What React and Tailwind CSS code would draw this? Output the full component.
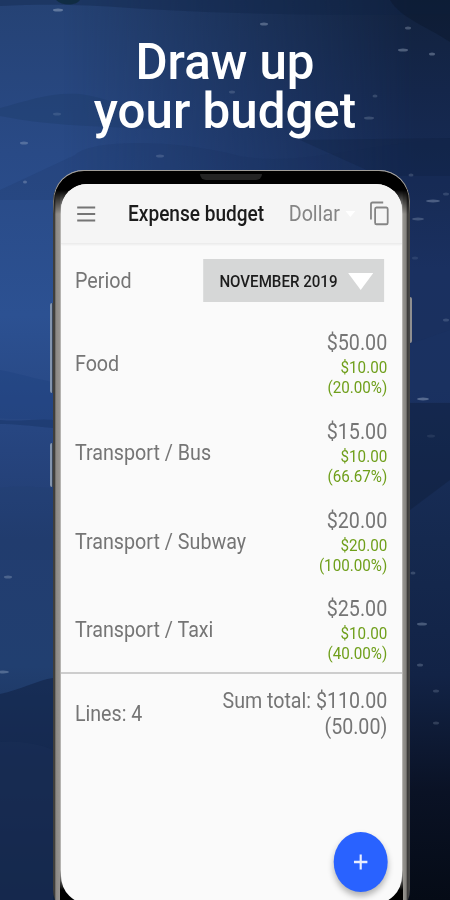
import { clsx } from "clsx";

const budgetLines = [
  { name: "Food", amount: "$50.00", spent: "$10.00", percent: "(20.00%)" },
  { name: "Transport / Bus", amount: "$15.00", spent: "$10.00", percent: "(66.67%)" },
  { name: "Transport / Subway", amount: "$20.00", spent: "$20.00", percent: "(100.00%)" },
  { name: "Transport / Taxi", amount: "$25.00", spent: "$10.00", percent: "(40.00%)" },
];

// x, y, half width, opacity
const stars = [
  [58, 10, 5, 0.4],
  [264, 24, 4, 0.35],
  [408, 28, 3, 0.3],
  [403, 50, 5, 0.35],
  [432, 54, 3, 0.35],
  [232, 92, 3, 0.2],
  [375, 96, 2.5, 0.2],
  [369, 118, 5, 0.22],
  [57, 114, 4, 0.15],
  [24, 143, 4, 0.3],
  [160, 156, 4, 0.2],
  [25, 182, 2, 0.3],
  [411, 175, 2.5, 0.2],
  [433, 201, 7, 0.32],
  [418, 219, 6, 0.26],
  [446, 194, 3, 0.18],
  [415, 258, 3, 0.12],
  [446, 320, 3, 0.2],
  [423, 399, 6, 0.38],
  [431, 436, 4, 0.1],
  [8, 577, 4, 0.28],
  [413, 573, 2.5, 0.22],
  [422, 624, 5, 0.32],
  [3, 672, 6, 0.32],
  [420, 665, 3, 0.25],
  [436, 691, 3, 0.2],
  [436, 723, 3, 0.2],
];

const Backdrop = () => (
  <svg
    className="absolute inset-0"
    width="450"
    height="900"
    viewBox="0 0 450 900"
    preserveAspectRatio="none"
  >
    <defs>
      <linearGradient id="left" x1="0" y1="0" x2="0" y2="1">
        <stop offset="0" stopColor="#254274" />
        <stop offset="0.17" stopColor="#294a86" />
        <stop offset="0.35" stopColor="#2c5192" />
        <stop offset="0.5" stopColor="#26447e" />
        <stop offset="0.6" stopColor="#223d70" />
        <stop offset="0.74" stopColor="#213f70" />
        <stop offset="0.85" stopColor="#1b3159" />
        <stop offset="1" stopColor="#10233f" />
      </linearGradient>
      <linearGradient id="right" x1="0" y1="0" x2="0" y2="1">
        <stop offset="0" stopColor="#12223e" />
        <stop offset="0.1" stopColor="#14264a" />
        <stop offset="0.3" stopColor="#1a3060" />
        <stop offset="0.43" stopColor="#1a305e" />
        <stop offset="0.6" stopColor="#15294f" />
        <stop offset="0.75" stopColor="#122346" />
        <stop offset="0.88" stopColor="#0a1225" />
        <stop offset="1" stopColor="#050b16" />
      </linearGradient>
      <linearGradient id="fade" x1="0" y1="0" x2="1" y2="0">
        <stop offset="0.14" stopColor="#fff" stopOpacity="0" />
        <stop offset="0.92" stopColor="#fff" />
      </linearGradient>
      <mask id="rightMask">
        <rect width="450" height="900" fill="url(#fade)" />
      </mask>
    </defs>
    <rect width="450" height="900" fill="url(#left)" />
    <rect width="450" height="900" fill="url(#right)" mask="url(#rightMask)" />
    {/* Hills and clouds */}
    <path d="M0 0H450V14C330 16 220 14 130 8C80 4 40 4 0 6Z" fill="#0f2344" opacity="0.35" />
    <path d="M56 0H80C76 6 62 6 56 0Z" fill="#0e2a3c" opacity="0.8" />
    <path d="M390 0H450V42C430 28 400 18 390 0Z" fill="#081426" opacity="0.35" />
    <path d="M0 108C30 100 50 92 80 94C120 100 150 118 170 130C120 126 60 128 0 116Z" fill="#1b3765" opacity="0.3" />
    <path d="M75 155C90 140 170 138 240 156C300 168 380 140 450 140V200H0V190Z" fill="#132a52" opacity="0.14" />
    <path d="M300 140L450 138V176H380Z" fill="#0c1a30" opacity="0.2" />
    <path d="M0 370C20 374 40 380 53 382V420C30 418 15 420 0 418Z" fill="#1f4080" opacity="0.4" />
    <path d="M0 420C20 422 40 418 53 420V428C30 426 15 424 0 424Z" fill="#152f5e" opacity="0.4" />
    <path d="M0 488C20 484 40 488 53 488V560H0Z" fill="#1b3663" opacity="0.1" />
    <path d="M0 694C20 690 38 680 53 678V900H0Z" fill="#12254a" opacity="0.65" />
    <path d="M0 742C20 740 40 744 53 750V900H0Z" fill="#1b3058" opacity="0.4" />
    <path d="M410 344L450 330V402H410Z" fill="#1c3668" opacity="0.3" />
    <path d="M410 403H450V480L410 510Z" fill="#0c1a34" opacity="0.35" />
    {stars.map(([x, y, r, o]) => (
      <ellipse key={`${x}-${y}`} cx={x} cy={y} rx={r} ry="1.5" fill="#b9c8dc" opacity={o} />
    ))}
  </svg>
);

const CopyIcon = () => (
  <svg width="24" height="28" viewBox="0 0 24 28" fill="none" stroke="#858585" strokeWidth="2">
    <path d="M2.4 19.5V4.2Q2.4 2.6 4.2 2.6H16" />
    <rect x="7" y="7.4" width="14" height="16.8" rx="1.5" />
  </svg>
);

const BudgetRow = ({ line }) => (
  <div className="flex h-[88.67px] items-center justify-between pl-[15.5px] pr-[16.5px]">
    <span className="pt-px text-[21.9px] leading-7">{line.name}</span>
    <div className="-mt-px flex flex-col items-end">
      <span className="text-[21.9px] leading-7">{line.amount}</span>
      <span className="text-[16.9px] leading-5 text-[#6f9f1b]">{line.spent}</span>
      <span className="text-[16.9px] leading-5 text-[#6f9f1b]">{line.percent}</span>
    </div>
  </div>
);

const SideButton = ({ className }) => (
  <div className={clsx("absolute w-[4px] rounded-sm", className)} />
);

const App = () => {
  return (
    <div className="relative flex h-[900px] w-[450px] flex-col overflow-hidden bg-[#1d3666] font-['Roboto',sans-serif]">
      <Backdrop />

      <h1 className="relative mt-[38px] origin-center scale-x-[0.985] text-center text-[50px] leading-[49px] font-medium text-white">
        Draw up
        <br />
        your budget
      </h1>

      {/* Phone */}
      <div className="relative mt-[33.5px] ml-[53px] w-[357px]">
        <SideButton className="top-[133px] -left-[3px] h-[90px] border-l-2 border-[#8294ae] bg-[#3a4658]" />
        <SideButton className="top-[273px] -left-[3px] h-[44px] border-l-2 border-[#8294ae] bg-[#3a4658]" />
        <SideButton className="top-[127px] -right-[2px] h-[46px] bg-[#8f8f90]" />
        <div className="relative h-[750px] overflow-hidden rounded-[31px] bg-[linear-gradient(to_right,#3f3e3b_0,#3f3e3b_1.5px,#8b8884_3px,#96938f_6.5px,#c4c3c1_8px,#c4c3c1_349px,#94928d_350.5px,#85837f_353px,#3d3c3b_354.5px,#4a4a4a_357px)]">
          {/* Black glass edge, only visible at the top and bottom */}
          <div className="absolute inset-0 rounded-[31px] border-[1.5px] border-[#a09d98] bg-black mask-[linear-gradient(#000_20px,transparent_44px)]" />
          <div className="absolute top-[690px] right-[7px] bottom-0 left-[7px] bg-black mask-[linear-gradient(transparent_10px,#000_30px)]" />
          <div className="absolute top-[4px] left-[147px] h-[6px] w-[62px] rounded-b-md bg-[#242424]" />

          <div className="relative mt-[14px] ml-[8px] h-[720px] w-[341px] overflow-hidden rounded-t-[26px] rounded-b-[28px] bg-[#fafafa]">
            {/* The screen is drawn at 10/9 width and squeezed back */}
            <div className="h-full w-[379px] origin-left scale-x-90 text-[#757575]">
              <header className="flex h-[60px] items-center border-b border-[#ececec] bg-[#f5f5f5] pt-px shadow-xs">
                <svg className="ml-[17px]" width="22" height="16" viewBox="0 0 22 16" stroke="#757575" strokeWidth="2">
                  <path d="M1 1.5H21M1 8H21M1 14.5H21" />
                </svg>
                <span className="ml-[35.5px] w-[178.5px] pt-px text-[21.2px] font-medium whitespace-nowrap text-[#1c1c1c]">
                  Expense budget
                </span>
                <span className="pt-[2px] text-[21.9px] text-[#858585]">Dollar</span>
                <svg className="ml-[6px]" width="11" height="6" viewBox="0 0 11 6" fill="#fff">
                  <path d="M0 0H11L5.5 6Z" />
                </svg>
                <div className="ml-[15px]">
                  <CopyIcon />
                </div>
              </header>

              <div className="flex h-[75px] items-center justify-between pl-[15.5px] pr-[20px]">
                <span className="pt-px text-[21.9px]">Period</span>
                <button className="-mt-px flex h-[43px] w-[201px] items-center justify-between bg-[#d6d7d7] pt-px pr-[12px] pl-[18px] text-[16.8px] font-medium text-[#1c1c1c]">
                  <span className="pt-px whitespace-nowrap">NOVEMBER 2019</span>
                  <svg width="28" height="17" viewBox="0 0 28 17" fill="#fff">
                    <path d="M0 0H28L14 17Z" />
                  </svg>
                </button>
              </div>

              <div className="pt-px">
                {budgetLines.map((line) => (
                  <BudgetRow key={line.name} line={line} />
                ))}
              </div>

              {/* Totals */}
              <div className="-mt-[2px] flex h-[80px] items-center justify-between border-t-2 border-[#cdcdcd] pl-[15.5px] pr-[16.5px] text-[21.8px] leading-[25.5px]">
                <span className="pt-px">Lines: 4</span>
                <span className="pt-px text-right">
                  Sum total: $110.00
                  <br />
                  (50.00)
                </span>
              </div>

              <button className="mt-[80px] ml-[303px] flex h-[60px] w-[60px] items-center justify-center rounded-full bg-[#2962ff] shadow-[0_4px_7px_rgba(0,0,0,0.3)]">
                <svg width="16" height="16" viewBox="0 0 16 16" stroke="#e9eeff" strokeWidth="2.4">
                  <path d="M8 0.5V15.5M0.5 8H15.5" />
                </svg>
              </button>
            </div>
          </div>
        </div>
      </div>
    </div>
  );
};

export default App;
